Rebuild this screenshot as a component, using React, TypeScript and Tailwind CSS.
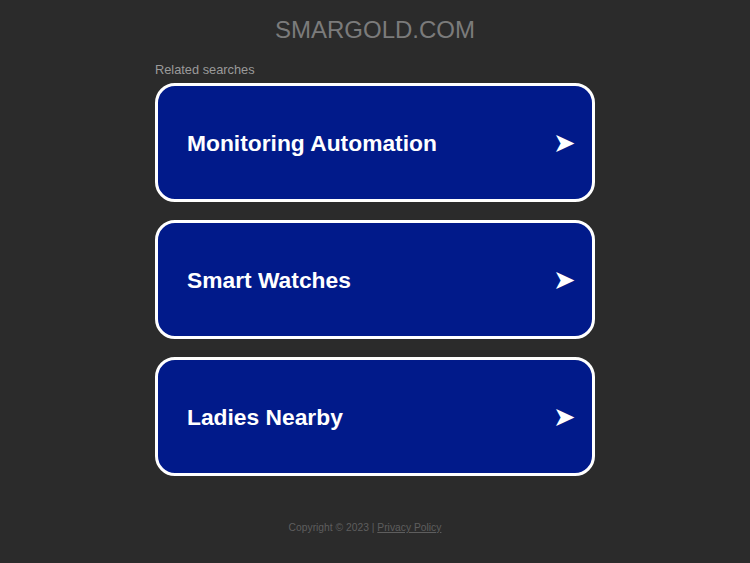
const items = ["Monitoring Automation", "Smart Watches", "Ladies Nearby"];

export default function App() {
  return (
    <main className="min-h-[563px] bg-[#2b2b2b] font-['Liberation_Sans',Arial,sans-serif] flex flex-col items-center">
      <h1 className="mt-[15px] text-[24px] leading-[30px] text-[#7b7b7b]">SMARGOLD.COM</h1>
      <div className="w-[440px] mt-[16px]">
        <p className="text-[12.8px] leading-[16px] text-[#9a9a9a] pt-[1px] mb-[5px]">Related searches</p>
        <div className="flex flex-col gap-[18px]">
          {items.map((t) => (
            <a
              key={t}
              href="#"
              className="h-[119px] rounded-[20px] border-[3px] border-white bg-[#011a8a] flex items-center justify-between pl-[29px] pr-[16px] pt-[2px]"
            >
              <span className="text-[22.8px] font-bold text-white">{t}</span>
              <span className="text-[27px] leading-none text-white">➤</span>
            </a>
          ))}
        </div>
      </div>
      <footer className="mt-[44px] mr-[20px] text-[10.3px] text-[#5e5e5e]">
        Copyright © 2023 | <a href="#" className="underline">Privacy Policy</a>
      </footer>
    </main>
  );
}
